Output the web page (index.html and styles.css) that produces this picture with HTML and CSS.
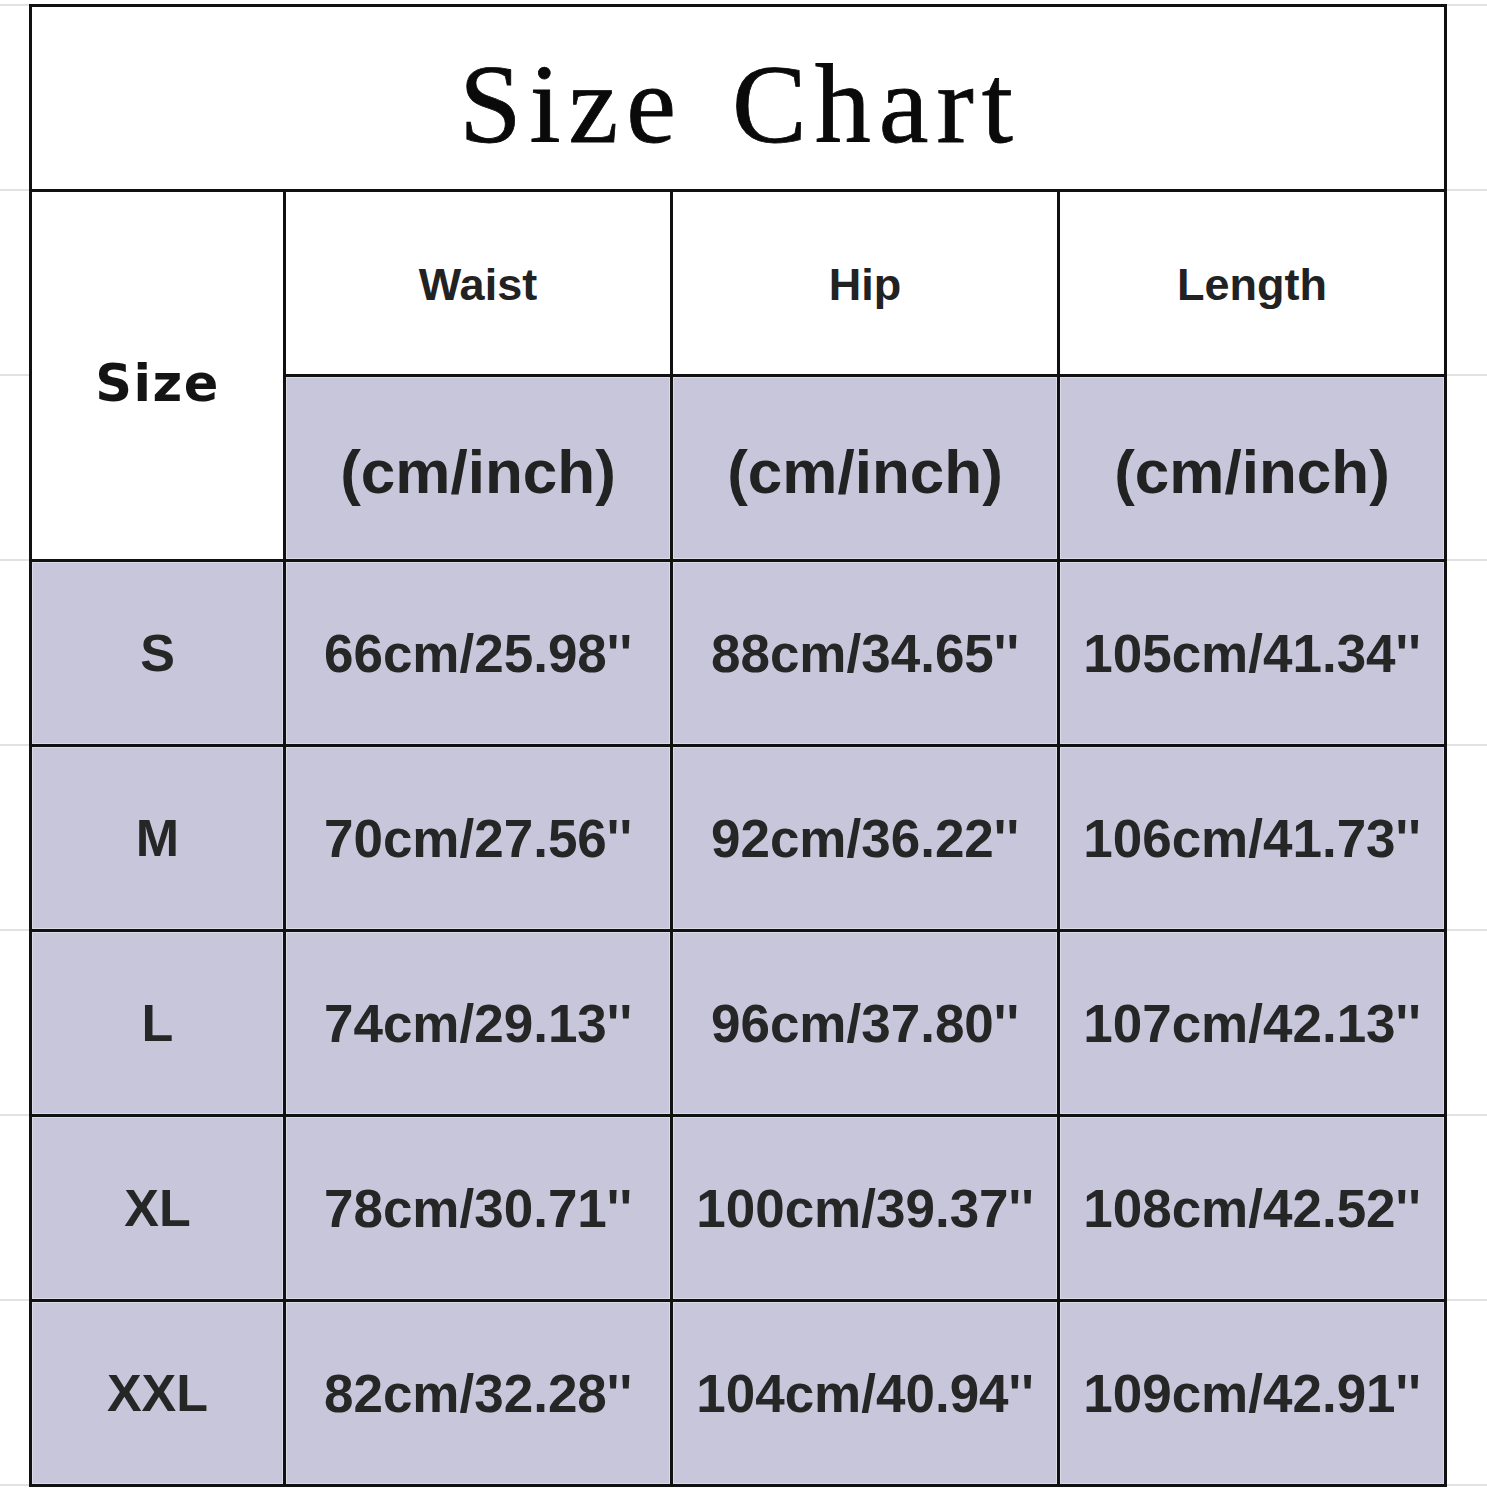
FILE: index.html
```html
<!DOCTYPE html>
<html>
<head>
<meta charset="utf-8">
<link rel="stylesheet" href="styles.css">
</head>
<body>
<div class="chart">
  <div class="cell title">Size Chart</div>
  <div class="cell size-head">Size</div>
  <div class="cell head">Waist</div>
  <div class="cell head">Hip</div>
  <div class="cell head">Length</div>
  <div class="cell unit">(cm/inch)</div>
  <div class="cell unit">(cm/inch)</div>
  <div class="cell unit">(cm/inch)</div>

  <div class="cell data label">S</div>
  <div class="cell data">66cm/25.98''</div>
  <div class="cell data">88cm/34.65''</div>
  <div class="cell data">105cm/41.34''</div>

  <div class="cell data label">M</div>
  <div class="cell data">70cm/27.56''</div>
  <div class="cell data">92cm/36.22''</div>
  <div class="cell data">106cm/41.73''</div>

  <div class="cell data label">L</div>
  <div class="cell data">74cm/29.13''</div>
  <div class="cell data">96cm/37.80''</div>
  <div class="cell data">107cm/42.13''</div>

  <div class="cell data label">XL</div>
  <div class="cell data">78cm/30.71''</div>
  <div class="cell data">100cm/39.37''</div>
  <div class="cell data">108cm/42.52''</div>

  <div class="cell data label">XXL</div>
  <div class="cell data">82cm/32.28''</div>
  <div class="cell data">104cm/40.94''</div>
  <div class="cell data">109cm/42.91''</div>
</div>
</body>
</html>
```

FILE: styles.css
```css
html, body {
  margin: 0;
  padding: 0;
}

body {
  background-color: #ffffff;
  background-image: repeating-linear-gradient(
    to bottom,
    transparent 0,
    transparent 4px,
    #e2e2e2 4px,
    #e2e2e2 6px,
    transparent 6px,
    transparent 185px
  );
  width: 1487px;
  height: 1500px;
  font-family: "Liberation Sans", Arial, sans-serif;
}

.chart {
  margin: 4px 0 0 29px;
  width: 1418px;
  box-sizing: border-box;
  display: grid;
  grid-template-columns: 251px 384px 384px 384px;
  grid-template-rows: repeat(8, 182px);
  gap: 3px;
  padding: 3px;
  background: #111111;
}

.cell {
  display: flex;
  align-items: center;
  justify-content: center;
  background: #c8c6db;
  color: #1c1c1c;
  font-weight: bold;
  white-space: nowrap;
  box-shadow: inset 0 0 0 1px rgba(255, 255, 255, 0.35);
}

.title {
  grid-column: 1 / 5;
  background: #ffffff;
  box-shadow: none;
  font-family: "Liberation Serif", "Times New Roman", serif;
  font-weight: normal;
  font-size: 112px;
  letter-spacing: 8px;
  word-spacing: 12px;
  color: #0a0a0a;
  -webkit-text-stroke: 0.8px #0a0a0a;
  padding-top: 12px;
  padding-left: 4px;
}

.size-head {
  grid-row: 2 / 4;
  background: #ffffff;
  box-shadow: none;
  font-family: "DejaVu Sans", Verdana, sans-serif;
  font-size: 51px;
  letter-spacing: 1.5px;
  padding-top: 16px;
  color: #141414;
}

.head {
  background: #ffffff;
  box-shadow: none;
  font-size: 45px;
  color: #222222;
  padding-top: 4px;
}

.unit {
  font-size: 62px;
  padding-top: 6px;
  color: #222222;
}

.data {
  font-size: 53px;
  color: #262626;
}

.label {
  font-size: 52px;
}
```
